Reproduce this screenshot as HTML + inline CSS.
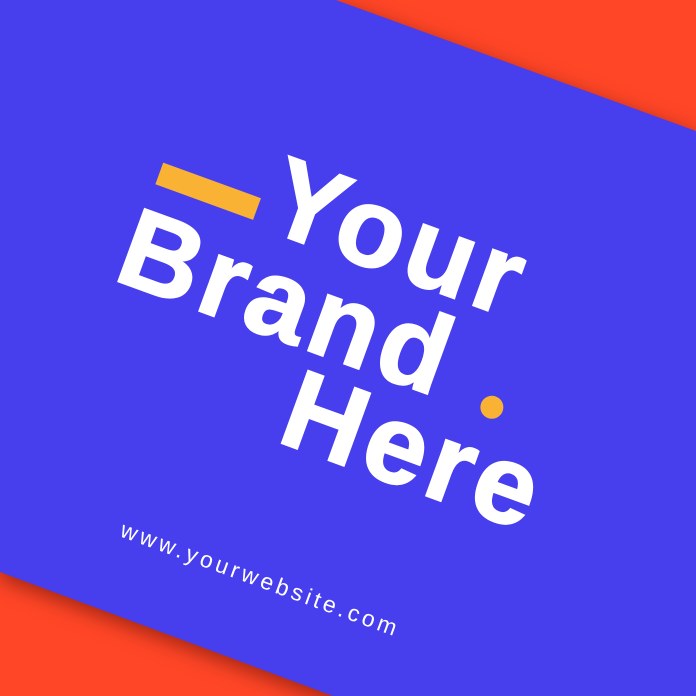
<!DOCTYPE html>
<html><head><meta charset="utf-8"><style>
html,body{margin:0;padding:0;width:696px;height:696px;overflow:hidden}
body{background:#FF4627}
#f{position:relative;width:696px;height:696px;overflow:hidden;background:#FF4627}
.sh{position:absolute;left:0;top:0;width:696px;height:696px;filter:drop-shadow(0 6px 10px rgba(80,10,0,.55))}
.band{position:absolute;left:0;top:0;width:696px;height:696px;background:#473EEE;clip-path:polygon(0 0,336px 0,696px 131px,696px 696px,333px 696px,0 572px)}
#r{position:absolute;left:0;top:0;width:0;height:0;transform-origin:0 0;transform:rotate(20deg)}
.t{position:absolute;font-family:"Liberation Sans",sans-serif;font-weight:bold;font-size:112px;line-height:112px;color:#fff;letter-spacing:5px;white-space:nowrap;-webkit-text-stroke:2px #fff}
.bar{position:absolute;left:209px;top:97px;width:104px;height:23px;background:#F9B233}
.dot{position:absolute;left:590px;top:203px;width:23px;height:23px;border-radius:50%;background:#F9B233}
.url{position:absolute;left:295px;top:444px;font-family:"Liberation Sans",sans-serif;font-size:23px;line-height:23px;color:#fff;letter-spacing:3.6px;white-space:nowrap}
</style></head><body>
<div id="f">
<div class="sh"><div class="band"></div></div>
<div id="r">
<div class="bar"></div>
<div class="t" style="left:323px;top:31px">Your</div>
<div class="t" style="left:200px;top:130px">Brand</div>
<div class="t" style="left:409px;top:226px">Here</div>
<div class="dot"></div>
<div class="url">www.yourwebsite.com</div>
</div>
</div>
</body></html>
